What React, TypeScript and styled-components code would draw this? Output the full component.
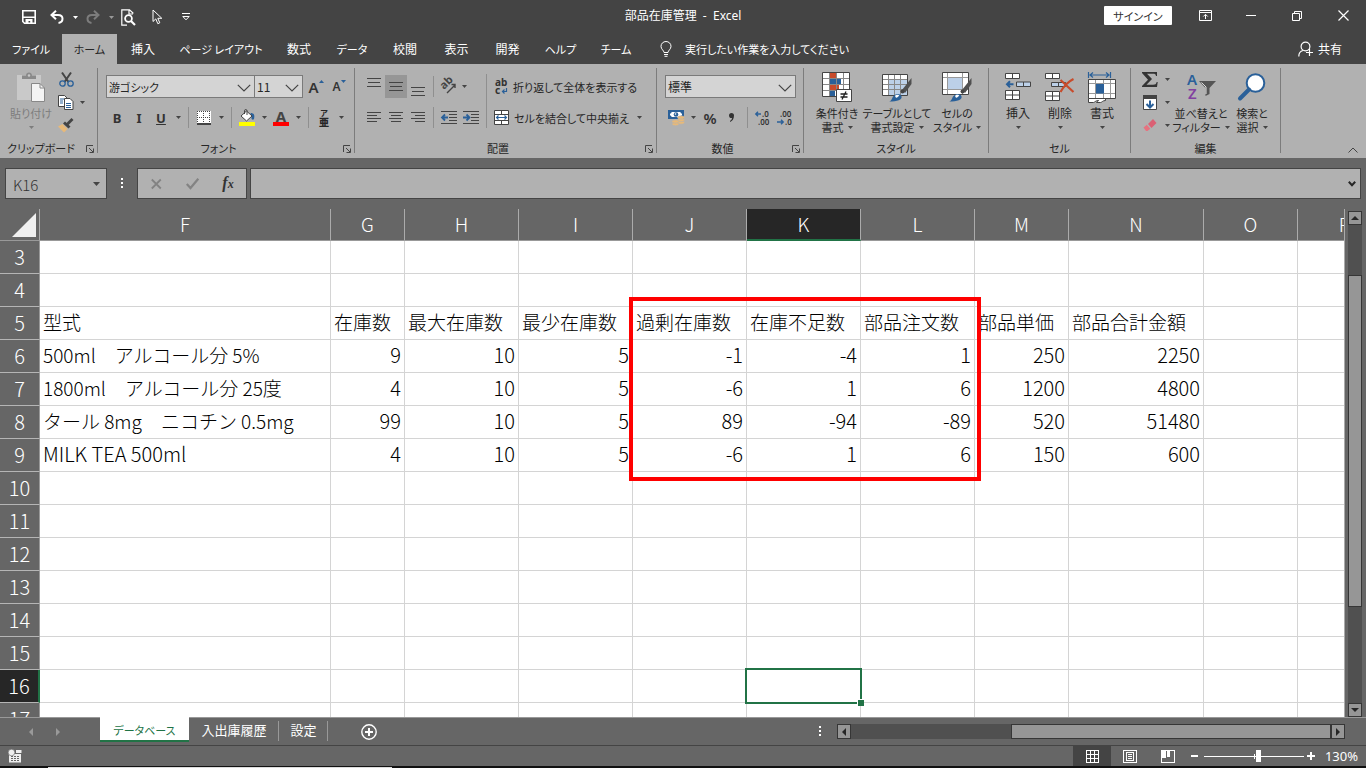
import React from 'react';
import styled, { createGlobalStyle } from 'styled-components';

const ui = '"Noto Sans CJK JP", "Noto Sans", sans-serif';

const GlobalStyle = createGlobalStyle`
  * { box-sizing: border-box; }
  body { margin: 0; background: #666; }
  button, select, input { font: inherit; color: inherit; padding: 0; margin: 0; border: 0; background: none; border-radius: 0; }
  svg { display: block; flex: none; overflow: visible; }
`;

const Window = styled.div`
  display: flex;
  flex-direction: column;
  height: 100vh;
  overflow: hidden;
  background: #666;
  color: #262626;
  font: 12px/14px ${ui};
  font-feature-settings: 'palt';
`;

/* ---------- title bar and tabs ---------- */
const TitleBar = styled.header`
  display: grid;
  grid-template-columns: 1fr auto 1fr;
  align-items: center;
  height: 34px;
  flex: none;
  background: #444;
  color: #fff;
`;
const QuickAccess = styled.div`
  display: flex;
  align-items: center;
  padding-left: 18px;
`;
const Title = styled.h1`
  margin: 0;
  font: 12px/14px "Noto Sans", "Noto Sans CJK JP", sans-serif;
  font-feature-settings: normal;
  white-space: pre;
  padding-bottom: 3px;
`;
const WindowButtons = styled.div`
  display: flex;
  align-items: center;
  justify-content: flex-end;
  padding-bottom: 3px;
`;
const SignIn = styled.button`
  width: 68px;
  height: 19px;
  margin-right: 10px;
  background: #fff;
  color: #333;
  font-size: 11px;
  border-radius: 1px;
`;
const IconButton = styled.button<{ $w?: number; $h?: number; $on?: boolean }>`
  display: flex;
  align-items: center;
  justify-content: center;
  flex: none;
  width: ${p => p.$w ?? 22}px;
  height: ${p => p.$h ?? 23}px;
  background: ${p => (p.$on ? '#969696' : 'transparent')};
`;
const TabRow = styled.nav`
  display: flex;
  flex: none;
  height: 30px;
  background: #444;
  color: #fff;
`;
const Tab = styled.button<{ $w: number; $kana?: boolean; $on?: boolean }>`
  width: ${p => p.$w}px;
  white-space: nowrap;
  font-size: ${p => (p.$kana ? 11 : 12)}px;
  background: ${p => (p.$on ? '#b1b1b1' : 'transparent')};
  color: ${p => (p.$on ? '#262626' : '#fff')};
`;
const TellMe = styled.label`
  display: flex;
  align-items: center;
  gap: 13px;
  flex: 1;
  padding-left: 16px;
  font-size: 11px;
  input { width: 200px; }
  input::placeholder { color: #fff; opacity: 1; }
`;
const Share = styled.button`
  display: flex;
  align-items: center;
  gap: 4px;
  padding-right: 24px;
`;

/* ---------- ribbon ---------- */
const Ribbon = styled.div`
  display: flex;
  flex: none;
  height: 94px;
  padding: 4px 0 5px;
  background: #b1b1b1;
`;
const Group = styled.section<{ $w: number }>`
  display: flex;
  flex-direction: column;
  flex: none;
  width: ${p => p.$w}px;
  border-right: 1px solid #7c7c7c;
`;
const GroupBody = styled.div<{ $pad?: number }>`
  display: flex;
  flex: 1;
  min-height: 0;
  padding-left: ${p => p.$pad ?? 8}px;
`;
const GroupFoot = styled.footer`
  display: flex;
  align-items: flex-end;
  height: 12px;
  font-size: 11px;
  text-align: center;
  white-space: nowrap;
  line-height: 10px;
  span { flex: 1; }
  button { display: flex; justify-content: flex-end; align-items: flex-end; width: 12px; height: 12px; margin-right: 3px; }
`;
const Stack = styled.div<{ $gap?: number; $top?: number }>`
  display: flex;
  flex-direction: column;
  gap: ${p => p.$gap ?? 8}px;
  padding-top: ${p => p.$top ?? 7}px;
`;
const Row = styled.div`
  display: flex;
  align-items: center;
  height: 23px;
`;
const Sep = styled.i<{ $h?: number }>`
  width: 1px;
  height: ${p => p.$h ?? 21}px;
  margin: 0 4px;
  background: #8f8f8f;
`;
const Combo = styled.div<{ $w: number }>`
  position: relative;
  width: ${p => p.$w}px;
  height: 23px;
  border: 1px solid #7a7a7a;
  background: #d4d4d4;
  & + & { border-left: 0; }
  select { appearance: none; width: 100%; height: 21px; padding-left: 2px; outline: 0; font-size: ${p => (p.$w > 140 ? 11 : 12)}px; }
  svg { position: absolute; right: 3px; top: 8px; pointer-events: none; }
`;
const Glyph = styled.span<{ $size?: number; $weight?: number }>`
  font: ${p => p.$weight ?? 700} ${p => p.$size ?? 13}px/16px "Noto Sans", "Open Sans", sans-serif;
  color: #333;
`;
const WideButton = styled.button`
  display: flex;
  align-items: center;
  gap: 5px;
  height: 23px;
  padding-left: 3px;
  font-size: 11px;
  white-space: nowrap;
`;
const BigButton = styled.button<{ $w: number; $dim?: boolean; $small?: boolean }>`
  display: flex;
  flex-direction: column;
  align-items: center;
  flex: none;
  width: ${p => p.$w}px;
  height: 70px;
  padding-top: 3px;
  white-space: nowrap;
  font-size: ${p => (p.$small ? 11 : 12)}px;
  color: ${p => (p.$dim ? '#7d7d7d' : '#262626')};
`;
const BigIcon = styled.span`
  display: flex;
  align-items: center;
  justify-content: center;
  height: 32px;
  margin-bottom: 3px;
`;
const Line = styled.span`
  display: flex;
  align-items: center;
  justify-content: center;
  gap: 4px;
  height: 14px;
`;
const RibbonEnd = styled.div`
  display: flex;
  flex: 1;
  align-items: flex-end;
  justify-content: flex-end;
  padding-right: 3px;
`;
const FontColor = styled.span`
  width: 16px;
  height: 17px;
  border-bottom: 4px solid #f00;
  font: bold 15px/14px "Noto Sans", sans-serif;
  color: #444;
`;
const Phonetic = styled.span`
  display: flex;
  flex-direction: column;
  font: bold 8px/8px ${ui};
  b { font-size: 10px; line-height: 10px; }
`;

/* ---------- formula bar ---------- */
const FormulaRow = styled.div`
  display: flex;
  align-items: center;
  flex: none;
  height: 51px;
  padding: 0 5px;
`;
const Field = styled.div<{ $w?: number; $gap?: number }>`
  display: flex;
  align-items: center;
  height: 31px;
  width: ${p => (p.$w ? p.$w + 'px' : 'auto')};
  flex: ${p => (p.$w ? 'none' : '1')};
  margin-right: ${p => p.$gap ?? 0}px;
  border: 1px solid #444;
  background: #b1b1b1;
  input { flex: 1; min-width: 0; height: 29px; padding: 1px 0 0 7px; font-size: 15px; font-weight: 300; color: #333; outline: 0; }
`;
const Grip = styled.span`
  margin-right: 14px;
`;
const Fx = styled.i`
  font: italic bold 16px/16px "Liberation Serif", serif;
  color: #333;
  small { font-size: 12px; }
`;

/* ---------- worksheet ---------- */
const Work = styled.main`
  display: flex;
  flex: 1;
  min-height: 0;
`;
const Canvas = styled.div`
  position: relative;
  flex: 1;
  min-width: 0;
  overflow: hidden;
  background: #fff;
  border-right: 1px solid #ababab;
`;
const Sheet = styled.table`
  width: 100%;
  min-width: 1392px;
  table-layout: fixed;
  border-collapse: separate;
  border-spacing: 0;
  font-size: 19px;
  font-weight: 300;
  line-height: 28px;
  font-feature-settings: normal;
  color: #000;
  tr { height: 33px; }
  thead tr { height: 32px; }
`;
const ColHead = styled.th<{ $on?: boolean }>`
  padding: ${p => (p.$on ? '0 0 1px' : '0 0 2px')};
  font-weight: 300;
  color: #fff;
  background: ${p => (p.$on ? '#262626' : '#666')};
  border-right: 1px solid #ababab;
  border-bottom: ${p => (p.$on ? '2px solid #217346' : '1px solid #999')};
`;
const Corner = styled.div`
  display: flex;
  justify-content: flex-end;
  padding: 3px 3px 0 0;
`;
const RowHead = styled.th<{ $on?: boolean }>`
  padding: 0;
  font-weight: 300;
  font-size: 20px;
  color: #fff;
  background: ${p => (p.$on ? '#262626' : '#666')};
  border-right: ${p => (p.$on ? '2px solid #217346' : '1px solid #999')};
  border-bottom: 1px solid #b5b5b5;
`;
const Cell = styled.td<{ $num?: boolean; $latin?: boolean }>`
  position: relative;
  padding: 0 3px 3px;
  white-space: pre;
  font-size: ${p => (p.$latin ? 20 : 19)}px;
  text-align: ${p => (p.$num ? 'right' : 'left')};
  border-right: 1px solid #d4d4d4;
  border-bottom: 1px solid #d4d4d4;
`;
const Selection = styled.div`
  position: absolute;
  inset: -2px;
  border: 2px solid #217346;
  z-index: 1;
  &::after {
    content: '';
    position: absolute;
    right: -4px;
    bottom: -4px;
    width: 6px;
    height: 6px;
    background: #217346;
    border: solid #fff;
    border-width: 1px 0 0 1px;
  }
`;
const Highlight = styled.div`
  position: absolute;
  left: 629px;
  top: 88px;
  width: 352px;
  height: 184px;
  border: 4px solid #f00;
`;
const VScroll = styled.div`
  display: flex;
  flex-direction: column;
  width: 21px;
  padding: 2px 4px 0 3px;
`;
const Track = styled.div<{ $v?: boolean }>`
  display: flex;
  flex-direction: ${p => (p.$v ? 'column' : 'row')};
  flex: 1;
  background: #505050;
`;
const Space = styled.div<{ $f: number }>`
  flex: ${p => p.$f} 1 0;
`;
const Thumb = styled.div<{ $f: number }>`
  flex: ${p => p.$f} 1 0;
  border: 1px solid #363636;
  background: #969696;
`;
const ScrollButton = styled.button`
  display: flex;
  align-items: center;
  justify-content: center;
  flex: none;
  width: 14px;
  height: 14px;
  border: 1px solid #363636;
  background: #969696;
`;

/* ---------- sheet tabs and status bar ---------- */
const SheetBar = styled.div`
  display: flex;
  flex: none;
  height: 28px;
  color: #fff;
`;
const SheetNav = styled.div`
  display: flex;
  align-items: center;
  width: 100px;
  padding-left: 17px;
  border-top: 1px solid #999;
`;
const SheetTab = styled.button<{ $w: number; $on?: boolean }>`
  width: ${p => p.$w}px;
  height: ${p => (p.$on ? 25 : 28)}px;
  white-space: nowrap;
  ${p => p.$on
    ? 'padding-top:2px;font-size:11px;background:#fff;color:#217346;border-bottom:2px solid #217346;'
    : 'padding-bottom:3px;font-size:13px;border-top:1px solid #999;background:linear-gradient(#999,#999) right 3px/1px 20px no-repeat;'}
`;
const SheetRest = styled.div`
  display: flex;
  flex: 1;
  align-items: center;
  padding: 0 21px 0 30px;
  border-top: 1px solid #999;
`;
const NewSheet = styled.div`
  flex: 461 1 0;
`;
const HScroll = styled.div`
  display: flex;
  align-items: center;
  gap: 16px;
  flex: 526 1 0;
`;
const HBar = styled.div`
  display: flex;
  flex: 1;
  height: 15px;
  ${ScrollButton} { height: 15px; }
`;
const Status = styled.footer`
  display: flex;
  align-items: center;
  flex: none;
  height: 21px;
  padding: 0 8px;
  border-top: 1px solid #444;
  color: #fff;
`;
const StatusRight = styled.div`
  display: flex;
  align-items: center;
  margin-left: auto;
`;
const ViewButton = styled(IconButton)`
  background: ${p => (p.$on ? '#444' : 'transparent')};
`;
const Zoom = styled.input`
  appearance: none;
  width: 100px;
  height: 14px;
  margin: 0 3px;
  background:
    linear-gradient(#fff, #fff) 0 7px / 100% 1px no-repeat,
    linear-gradient(#fff, #fff) 50px 5px / 1px 5px no-repeat;
  &::-webkit-slider-thumb { appearance: none; width: 5px; height: 12px; background: #fff; }
`;
const Percent = styled.output`
  width: 43px;
  text-align: right;
  font: 13px/14px "Noto Sans", sans-serif;
`;
const Desktop = styled.div`
  flex: none;
  height: 2px;
  padding: 1px 0 0 48px;
  background: #111;
  &::before { content: ''; display: block; width: 344px; height: 1px; background: #ddd; }
`;

/* ---------- icons ---------- */
const K = '#444', B = '#2a6099';
type SvgProps = { w: number; h: number; children: React.ReactNode; crisp?: boolean };
const Svg = ({ w, h, children, crisp }: SvgProps) => (
  <svg width={w} height={h} viewBox={`0 0 ${w} ${h}`} fill="none" shapeRendering={crisp ? 'crispEdges' : undefined} aria-hidden="true">{children}</svg>
);
const Caret = ({ c = K }: { c?: string }) => <Svg w={5} h={3}><path d="M0 0h5L2.500 3z" fill={c} /></Svg>;
const CaretButton = ({ w = 12, c, label }: { w?: number; c?: string; label: string }) => (
  <IconButton $w={w} aria-label={label}><Caret c={c} /></IconButton>
);
const Chevron = () => <Svg w={14} h={8}><path d="M.8.8 7 7 13.200.8" stroke={K} strokeWidth="1.200" /></Svg>;
const Launcher = () => <Svg w={8} h={8}><path d="M.5 7V.5H7M3 3l4 4M7.500 3.500v4h-4" stroke={K} /></Svg>;

const Lines = ({ rows }: { rows: [number, number, number][] }) => (
  <Svg w={14} h={20} crisp>{rows.map(([x, y, w], i) => <rect key={i} x={x} y={y} width={w} height={1} fill={K} />)}</Svg>
);
const SaveIcon = () => <Svg w={14} h={14}><path d="M.8.8h12.400v12.400H2.500L.8 11.500z" stroke="#fff" strokeWidth="1.600" /><path d="M1 6.500h12V8H1zM3.500 9h7v4.500H8.200V11H6.500v2.500h-3z" fill="#fff" /></Svg>;
const UndoIcon = ({ flip }: { flip?: boolean }) => (
  <Svg w={16} h={14}><g transform={flip ? 'translate(16 0) scale(-1 1)' : undefined} stroke={flip ? '#7d7d7d' : '#fff'} strokeWidth="2"><path d="M7 .8 2.500 5 7 9.200" /><path d="M2.500 5H9c3.200 0 4.500 1.800 4.500 3.800 0 2.400-1.800 3.900-4 4.200" /></g></Svg>
);
const PreviewIcon = () => <Svg w={16} h={17}><path d="M13 4.500V4L9.500.8H1.800v15.400H7M9 1v4h4" stroke="#fff" strokeWidth="1.200" /><circle cx="8.500" cy="9.500" r="3.400" stroke="#fff" strokeWidth="1.800" /><path d="m11 12 4 4" stroke="#fff" strokeWidth="2.200" /></Svg>;
const PointerIcon = () => <Svg w={11} h={16}><path d="M1 1v11.500l2.800-2.600 2 4.800 2-.9-2-4.500h4z" stroke="#fff" /></Svg>;
const CustomizeIcon = () => <Svg w={8} h={8}><path d="M0 .5h8" stroke="#fff" /><path d="M.8 3.500h6.400L4 6.800z" stroke="#fff" /></Svg>;
const RibbonIcon = () => <Svg w={13} h={11}><path d="M.5.5h12v10H.5zM.5 2.500h12M6.500 9V4.500M4.300 6.500l2.200-2.200 2.200 2.200" stroke="#fff" /></Svg>;
const MinIcon = () => <Svg w={10} h={1}><path d="M0 .5h10" stroke="#fff" /></Svg>;
const RestoreIcon = () => <Svg w={10} h={10}><path d="M.5 2.500h7v7h-7zM2.500 2.500v-2h7v7h-2" stroke="#fff" /></Svg>;
const CloseIcon = () => <Svg w={11} h={11}><path d="m.5.5 10 10m0-10-10 10" stroke="#fff" strokeWidth="1.200" /></Svg>;
const BulbIcon = () => <Svg w={12} h={16}><path d="M4 11.500C4 9.500 1 8.300 1 5.300a5 4.800 0 0 1 10 0c0 3-3 4.200-3 6.200zM4 13.500h4M4.500 15.300h3" stroke="#fff" /></Svg>;
const ShareIcon = () => <Svg w={16} h={16}><circle cx="7.500" cy="5.500" r="4.400" stroke="#fff" strokeWidth="1.200" /><path d="M.8 15.500c0-3.500 2-5.500 4.200-6M11.500 8v7M8 11.500h7" stroke="#fff" strokeWidth="1.200" /></Svg>;

const PasteIcon = () => <Svg w={28} h={30}><path d="M0 3h24v25H0z" fill="#c9c9c9" /><path d="M5 7V3.500h4C9 1.500 10.300.5 12 .5s3 1 3 3h4V7z" fill="#8a8a8a" /><circle cx="12" cy="3.500" r="1.200" fill="#c9c9c9" /><path d="M14.500 11.500H23l4.500 4.500v13.500h-13z" fill="#f4f4f4" stroke="#888" /><path d="M23 11.500V16h4.500" stroke="#888" /></Svg>;
const CutIcon = () => <Svg w={15} h={15}><path d="M3 .5 9.500 10M12 .5 5.500 10" stroke={K} strokeWidth="2" /><circle cx="3.500" cy="11.500" r="2.700" stroke={B} strokeWidth="1.300" /><circle cx="11.500" cy="11.500" r="2.700" stroke={B} strokeWidth="1.300" /></Svg>;
const CopyIcon = () => <Svg w={16} h={15}><path d="M.5.500h6l3 3v8h-9z" fill="#fff" stroke={K} /><path d="M2 4h4M2 6h3M2 8h3" stroke={B} /><path d="M6.500 3.500H12l3 3v8H6.500z" fill="#fff" stroke={K} /><path d="M8 8.500h5M8 10.500h5M8 12.500h5" stroke={B} /></Svg>;
const BrushIcon = () => <Svg w={16} h={15}><path d="M0 8.500 4.500 6l5 5L6 14.500z" fill="#e8b978" /><path d="m5 5.500 2-2 5.500 5-2 2z" fill={K} /><path d="m9 6.500 5.500-5.500" stroke={K} strokeWidth="2.800" /></Svg>;
const BorderIcon = () => <Svg w={14} h={14} crisp><path d="M0 0h14v14H0z" fill="#fff" /><path d="M0 .5h14M0 6.500h14M.5 0v14M6.500 0v14M12.500 0v14" stroke={K} strokeDasharray="1 1" /><path d="M0 13h14" stroke={K} strokeWidth="2" /></Svg>;
const FillIcon = () => <Svg w={16} h={17}><path d="M11.500 4c3.500 0 4.500 2 3.500 6-.8 1.200-2.800.8-2.500-1.500z" fill={B} /><path d="m2 7 5.500-5L13 7l-5.500 5z" fill="#fff" stroke={K} /><path d="M5.500 5V1.500C5.500.3 8 .3 8 1.500V6" stroke={K} /><path d="M0 13h16v4H0z" fill="#ff0" /></Svg>;
const OrientIcon = () => <Svg w={18} h={17}><text x="0" y="0" transform="translate(5 12) rotate(-45)" fontFamily="Noto Sans" fontSize="11" fontWeight="bold" fill={K}>ab</text><path d="m8 15 8-8M12.500 6.500h3.500v3.500" stroke={K} strokeWidth="1.400" /></Svg>;
const IndentIcon = ({ right }: { right?: boolean }) => (
  <Svg w={16} h={14}><path d="M0 .5h16M8 3.500h8M8 6.500h8M8 9.500h8M0 12.500h16" stroke={K} />{right
    ? <path d="M0 6.500h6M3.500 3.500l3 3-3 3" stroke={B} strokeWidth="1.800" />
    : <path d="M1 6.500h6M4 3.500l-3 3 3 3" stroke={B} strokeWidth="1.800" />}</Svg>
);
const WrapIcon = () => <Svg w={14} h={16}><g fontFamily="Noto Sans" fontSize="10" fontWeight="bold" fill="#333"><text x="1" y="7">ab</text><text x="1" y="15">c</text></g><path d="M12.500 9v3.500H8.500M10.500 10.500l-2 2 2 2" stroke={B} strokeWidth="1.200" /></Svg>;
const MergeIcon = () => <Svg w={15} h={15}><path d="M.5.500h14v14H.5z" fill="#fff" /><path d="M.5.500h14v14H.5zM.5 4.500h14M.5 10.500h14M7.500.5v4M7.500 10.500v4" stroke={K} /><path d="M2.500 7.500h10M4.500 5.500l-2 2 2 2M10.500 5.500l2 2-2 2" stroke={B} strokeWidth="1.100" /></Svg>;
const MoneyIcon = () => <Svg w={17} h={17}><path d="M0 1h16v9H0z" fill={B} /><path d="M3.500 3h9c0 1 .5 1.500 1.500 1.500v2c-1 0-1.500.5-1.500 1.500h-9C3.500 7 3 6.500 2 6.500v-2c1 0 1.500-.5 1.500-1.500z" fill="#fff" /><circle cx="8" cy="5.500" r="2.300" fill={B} /><circle cx="7.500" cy="5" r=".8" fill="#fff" /><g fill="#e8b978" stroke="#b1b1b1" strokeWidth=".6"><ellipse cx="13" cy="13.500" rx="3.500" ry="1.700" /><ellipse cx="13" cy="11" rx="3.500" ry="1.700" /><ellipse cx="13" cy="8.500" rx="3.500" ry="1.700" /><ellipse cx="7.500" cy="15" rx="3.500" ry="1.700" /><ellipse cx="7.500" cy="12.500" rx="3.500" ry="1.700" /></g></Svg>;
const DecimalIcon = ({ less }: { less?: boolean }) => (
  <Svg w={16} h={16}><g fontFamily="Noto Sans" fontSize="8" fontWeight="600" fill="#333">{less
    ? <><text x="3" y="7">.00</text><text x="8" y="15">.0</text></>
    : <><text x="7" y="7">.0</text><text x="3" y="15">.00</text></>}</g>
    {less ? <path d="M0 12h6M4 9.800 6.200 12 4 14.200" stroke={B} strokeWidth="1.400" /> : <path d="M6 4H.8M3 1.800.8 4 3 6.200" stroke={B} strokeWidth="1.400" />}</Svg>
);
const CondIcon = () => (
  <Svg w={30} h={30}><path d="M.5.500h27v24H.5z" fill="#fff" /><path d="M8 .5h6V6H8zM8 13h9v5H8z" fill="#c84b2b" /><path d="M8 7h11v5H8zM8 19h5v5.500H8z" fill={B} /><path d="M.5 6.500h27M.5 12.500h27M.5 18.500h27M7.500.5v24M14.500.5v24M21.500.5v24" stroke="#888" /><path d="M.5.500h27v24H.5z" stroke={K} /><path d="M14.500 17.500h15v12h-15z" fill="#fff" stroke={K} /><path d="M18.500 22h7M18.500 25h7M24 19.500l-4 8" stroke="#222" strokeWidth="1.300" /></Svg>
);
const BigBrush = () => <><path d="m20 18 9.500-12v6L23 21z" fill="#505050" /><circle cx="20.500" cy="19.500" r="2" fill={K} /><path d="M7 29.500c3-.8 2.500-3 4.500-5.500 2.500-3 7-2.500 8 .2 1 3.600-4 5.300-12.500 5.300z" fill={B} /><path d="M13 24c1-2 4-1.600 4.300 0-1.300 0-1.800 2-3.300 1.800z" fill="#fff" /></>;
const TableIcon = () => <Svg w={30} h={30}><path d="M.5 2.500h25v21H.5z" fill="#fff" /><path d="M7 8h18.500v15.500H7z" fill="#bcd0e8" /><path d="M.5 7.500h25M.5 12.500h25M.5 17.500h25M6.500 2.500v21M12.500 2.500v21M18.500 2.500v21" stroke="#888" /><path d="M.5 2.500h25v21H.5z" stroke={K} /><BigBrush /></Svg>;
const StyleIcon = () => <Svg w={30} h={30}><path d="M.5.500h26v22H.5z" fill="#fff" /><path d="M.5 5.500h26M.5 17.500h26M5.500.5v22M20.500.5v22" stroke="#999" /><path d="M6 6h14v11H6z" fill="#bcd0e8" /><path d="M.5.500h26v22H.5z" stroke={K} /><BigBrush /></Svg>;
const InsertIcon = () => <Svg w={26} h={28}><path d="M.5.500h14v5H.5zM7.500.5v5M.5 17.500h14v9H.5zM.5 22h14M7.500 17.500v9" fill="#fff" stroke={K} /><path d="M11.500 9h14v4.500h-14zM18.500 9v4.500" fill="#bcd0e8" stroke={K} /><path d="M2 11.300h6.500M5 8.300l-3 3 3 3" stroke={B} strokeWidth="2" /></Svg>;
const DeleteIcon = () => <Svg w={30} h={29}><path d="M.5.500h14v5H.5zM7.500.5v5M.5 18.500h14v9H.5zM.5 23h14M7.500 18.500v9" fill="#fff" stroke={K} /><path d="M6.500 9.500h14v4h-14zM13.500 9.500v4" fill="#bcd0e8" stroke={K} /><path d="m15.500 7 13 12M28.500 6c-5 2.500-10 7.500-13 13" stroke="#c84b2b" strokeWidth="2.200" /></Svg>;
const FormatIcon = () => <Svg w={28} h={31}><path d="M.5 0v6M22.500 0v6M2 3h19M5 .5 2 3l3 2.500M18 .5 21 3l-3 2.500" stroke={B} strokeWidth="1.200" /><path d="M.5 7.500h27v19H.5z" fill="#fff" /><path d="M.5 11.500h27M.5 21.500h27M7.500 7.500v19M15.500 7.500v19M22.500 7.500v19" stroke="#999" /><path d="M8 12h8v9.500H8z" fill={B} /><path d="M.5 7.500h27v19H.5z" stroke={K} /><path d="M.5 26.500h17v2c-3 0-3.500 2-5 2h-4c1-1 2-1.500 2-2-3 0-4 2-5 2h-5z" fill="#fff" stroke={K} /></Svg>;
const SigmaIcon = () => <Svg w={16} h={15}><path d="M0 0h15v4h-1c-.3-1.800-1-2.200-3-2.200H5L10 7l-5.500 5.700H11c2.300 0 3.200-.5 3.700-2.700h1l-.7 5H0v-1l6-6.300L0 1z" fill="#333" /></Svg>;
const FillDownIcon = () => <Svg w={14} h={15}><path d="M.5.500h13v14H.5z" fill="#fff" stroke={K} /><path d="M0 0h14v4H0z" fill={K} /><path d="M7 5.500v7M3.500 9 7 12.500 10.500 9" stroke={B} strokeWidth="2" /></Svg>;
const EraserIcon = () => <Svg w={14} h={13}><path d="m5 5 5-5 3.500 4-5 5z" fill="#db6074" /><path d="m.5 8.500 3.300-2.800 3.500 4L4.500 12H3z" fill="#e7727f" /></Svg>;
const SortIcon = () => <Svg w={29} h={28}><g fontFamily="Noto Sans" fontSize="15" fontWeight="600"><text x="0" y="12" fill={B}>A</text><text x="1" y="26" fill="#8140a0">Z</text></g><path d="M12 8h17l-6.500 7v6l-4 2v-8z" fill="#555" /><path d="M14.500 9.500 19 14v7" stroke="#ddd" /></Svg>;
const FindIcon = () => <Svg w={28} h={28}><circle cx="17.500" cy="10" r="8.800" fill="#fff" stroke={B} strokeWidth="2" /><path d="m11 16.500-9 9" stroke={B} strokeWidth="4" strokeLinecap="round" /></Svg>;
const Tri = ({ d, c = '#262626' }: { d: 'u' | 'd' | 'l' | 'r'; c?: string }) => {
  const p = { u: 'M0 6h8L4 2z', d: 'M0 2h8L4 6z', l: 'M6 0v8L2 4z', r: 'M2 0v8l4-4z' }[d];
  return <Svg w={8} h={8}><path d={p} fill={c} /></Svg>;
};
const Dots = () => <Svg w={2} h={11} crisp><path d="M0 0h2v2H0zM0 4h2v2H0zM0 8h2v2H0z" fill="#fff" /></Svg>;

/* ---------- data ---------- */
const tabs: [string, number][] = [['ファイル', 62], ['ホーム', 55], ['挿入', 52], ['ページ レイアウト', 104], ['数式', 52], ['データ', 54], ['校閲', 52], ['表示', 51], ['開発', 51], ['ヘルプ', 55], ['チーム', 56]];
const cols: [string, number?][] = [['F', 291], ['G', 74], ['H', 114], ['I', 114], ['J', 114], ['K', 114], ['L', 114], ['M', 94], ['N', 135], ['O', 94], ['P']];
const data: Record<number, (string | number)[]> = {
  5: ['型式', '在庫数', '最大在庫数', '最少在庫数', '過剰在庫数', '在庫不足数', '部品注文数', '部品単価', '部品合計金額'],
  6: ['500ml　アルコール分 5%', 9, 10, 5, -1, -4, 1, 250, 2250],
  7: ['1800ml　アルコール分 25度', 4, 10, 5, -6, 1, 6, 1200, 4800],
  8: ['タール 8mg　ニコチン 0.5mg', 99, 10, 5, 89, -94, -89, 520, 51480],
  9: ['MILK TEA 500ml', 4, 10, 5, -6, 1, 6, 150, 600],
};
const rows = Array.from({ length: 15 }, (_, i) => i + 3);

const Foot = ({ label, more }: { label: string; more?: boolean }) => (
  <GroupFoot><span>{label}</span>{more && <button aria-label={`${label}の設定`}><Launcher /></button>}</GroupFoot>
);
const Big = ({ w, icon, a, b, small }: { w: number; icon: React.ReactNode; a: string; b?: string; small?: boolean }) => (
  <BigButton $w={w} $small={small}><BigIcon>{icon}</BigIcon><Line>{a}</Line><Line>{b}<Caret /></Line></BigButton>
);

export default function App() {
  return (
    <Window lang="ja">
      <GlobalStyle />
      <TitleBar>
        <QuickAccess>
          <IconButton aria-label="上書き保存"><SaveIcon /></IconButton>
          <IconButton $w={34} aria-label="元に戻す"><UndoIcon /></IconButton>
          <CaretButton w={2} c="#fff" label="元に戻す一覧" />
          <IconButton $w={34} aria-label="やり直し"><UndoIcon flip /></IconButton>
          <CaretButton w={2} c="#999" label="やり直し一覧" />
          <IconButton $w={32} aria-label="印刷プレビュー"><PreviewIcon /></IconButton>
          <IconButton $w={26} aria-label="選択"><PointerIcon /></IconButton>
          <IconButton $w={32} aria-label="カスタマイズ"><CustomizeIcon /></IconButton>
        </QuickAccess>
        <Title>部品在庫管理  -  Excel</Title>
        <WindowButtons>
          <SignIn>サインイン</SignIn>
          <IconButton $w={46} aria-label="リボンの表示"><RibbonIcon /></IconButton>
          <IconButton $w={46} aria-label="最小化"><MinIcon /></IconButton>
          <IconButton $w={46} aria-label="元のサイズ"><RestoreIcon /></IconButton>
          <IconButton $w={46} aria-label="閉じる"><CloseIcon /></IconButton>
        </WindowButtons>
      </TitleBar>
      <TabRow>
        {tabs.map(([t, w]) => <Tab key={t} $w={w} $kana={/[ァ-ン]/.test(t)} $on={t === 'ホーム'}>{t}</Tab>)}
        <TellMe><BulbIcon /><input aria-label="操作アシスト" placeholder="実行したい作業を入力してください" /></TellMe>
        <Share><ShareIcon />共有</Share>
      </TabRow>

      <Ribbon>
        <Group $w={98}>
          <GroupBody>
            <BigButton $w={46} $dim $small><BigIcon><PasteIcon /></BigIcon><Line>貼り付け</Line><Line><Caret c="#7d7d7d" /></Line></BigButton>
            <Stack $gap={0} $top={0}>
              <Row><IconButton $w={24} aria-label="切り取り"><CutIcon /></IconButton></Row>
              <Row><IconButton $w={24} aria-label="コピー"><CopyIcon /></IconButton><CaretButton w={8} label="コピー一覧" /></Row>
              <Row><IconButton $w={24} aria-label="書式のコピー"><BrushIcon /></IconButton></Row>
            </Stack>
          </GroupBody>
          <Foot label="クリップボード" more />
        </Group>

        <Group $w={257}>
          <GroupBody>
            <Stack>
              <Row>
                <Combo $w={149}><select aria-label="フォント名"><option>游ゴシック</option></select><Chevron /></Combo>
                <Combo $w={48}><select aria-label="フォント サイズ"><option>11</option></select><Chevron /></Combo>
                <IconButton $w={26} aria-label="フォント サイズの拡大"><Glyph $size={15} $weight={600}>A</Glyph><Svg w={5} h={14}><path d="M0 3h5L2.500 0z" fill={B} /></Svg></IconButton>
                <IconButton $w={20} aria-label="フォント サイズの縮小"><Glyph $size={12} $weight={600}>A</Glyph><Svg w={5} h={14}><path d="M0 0h5L2.500 3z" fill={B} /></Svg></IconButton>
              </Row>
              <Row>
                <IconButton aria-label="太字"><Glyph>B</Glyph></IconButton>
                <IconButton aria-label="斜体"><Glyph as="i">I</Glyph></IconButton>
                <IconButton aria-label="下線"><Glyph as="u">U</Glyph></IconButton>
                <CaretButton label="下線の種類" /><Sep />
                <IconButton aria-label="罫線"><BorderIcon /></IconButton><CaretButton label="罫線の種類" /><Sep />
                <IconButton aria-label="塗りつぶし"><FillIcon /></IconButton><CaretButton label="塗りつぶしの色" />
                <IconButton aria-label="文字色"><FontColor>A</FontColor></IconButton><CaretButton label="フォントの色" /><Sep />
                <IconButton aria-label="ふりがな"><Phonetic>ア<b>亜</b></Phonetic></IconButton><CaretButton label="ふりがなの設定" />
              </Row>
            </Stack>
          </GroupBody>
          <Foot label="フォント" more />
        </Group>

        <Group $w={302}>
          <GroupBody>
            <Stack>
              <Row>
                <IconButton aria-label="上揃え"><Lines rows={[[0, 1, 14], [1, 5, 12], [0, 9, 14]]} /></IconButton>
                <IconButton $on aria-label="上下中央揃え"><Lines rows={[[0, 5, 14], [1, 9, 12], [0, 13, 14]]} /></IconButton>
                <IconButton aria-label="下揃え"><Lines rows={[[0, 10, 14], [1, 14, 12], [0, 18, 14]]} /></IconButton>
                <Sep />
                <IconButton $w={20} aria-label="方向"><OrientIcon /></IconButton><CaretButton label="方向の種類" />
              </Row>
              <Row>
                <IconButton aria-label="左揃え"><Lines rows={[[0, 4, 14], [0, 7, 10], [0, 10, 14], [0, 13, 10]]} /></IconButton>
                <IconButton aria-label="中央揃え"><Lines rows={[[0, 4, 14], [2, 7, 10], [0, 10, 14], [2, 13, 10]]} /></IconButton>
                <IconButton aria-label="右揃え"><Lines rows={[[0, 4, 14], [4, 7, 10], [0, 10, 14], [4, 13, 10]]} /></IconButton>
                <Sep />
                <IconButton aria-label="インデントを減らす"><IndentIcon /></IconButton>
                <IconButton aria-label="インデントを増やす"><IndentIcon right /></IconButton>
              </Row>
            </Stack>
            <Stack $top={6}><Sep $h={54} /></Stack>
            <Stack>
              <Row><WideButton><WrapIcon />折り返して全体を表示する</WideButton></Row>
              <Row><WideButton><MergeIcon />セルを結合して中央揃え</WideButton><CaretButton w={22} label="結合の種類" /></Row>
            </Stack>
          </GroupBody>
          <Foot label="配置" more />
        </Group>

        <Group $w={147}>
          <GroupBody>
            <Stack>
              <Row><Combo $w={131}><select aria-label="数値の書式"><option>標準</option></select><Chevron /></Combo></Row>
              <Row>
                <IconButton aria-label="通貨表示形式"><MoneyIcon /></IconButton><CaretButton label="通貨の種類" />
                <IconButton aria-label="パーセント"><Glyph $size={15} $weight={600}>%</Glyph></IconButton>
                <IconButton aria-label="桁区切り"><Svg w={6} h={10}><path d="M0 2.500a2.500 2.500 0 0 1 5 0C5 6 3.500 8 1 9V8c1.200-.8 2-1.800 2-3C1.500 5.500 0 4.300 0 2.500z" fill="#333" /></Svg></IconButton>
                <Sep />
                <IconButton aria-label="小数点以下を増やす"><DecimalIcon /></IconButton>
                <IconButton aria-label="小数点以下を減らす"><DecimalIcon less /></IconButton>
              </Row>
            </Stack>
          </GroupBody>
          <Foot label="数値" more />
        </Group>

        <Group $w={185}>
          <GroupBody $pad={4}>
            <Big w={58} icon={<CondIcon />} a="条件付き" b="書式" small />
            <Big w={62} icon={<TableIcon />} a="テーブルとして" b="書式設定" small />
            <Big w={58} icon={<StyleIcon />} a="セルの" b="スタイル" small />
          </GroupBody>
          <Foot label="スタイル" />
        </Group>

        <Group $w={142}>
          <GroupBody>
            <Big w={42} icon={<InsertIcon />} a="挿入" />
            <Big w={42} icon={<DeleteIcon />} a="削除" />
            <Big w={42} icon={<FormatIcon />} a="書式" />
          </GroupBody>
          <Foot label="セル" />
        </Group>

        <Group $w={150}>
          <GroupBody>
            <Stack $gap={0} $top={0}>
              <Row><IconButton aria-label="合計"><SigmaIcon /></IconButton><CaretButton label="合計の種類" /></Row>
              <Row><IconButton aria-label="フィル"><FillDownIcon /></IconButton><CaretButton label="フィルの種類" /></Row>
              <Row><IconButton aria-label="クリア"><EraserIcon /></IconButton><CaretButton label="クリアの種類" /></Row>
            </Stack>
            <Big w={56} icon={<SortIcon />} a="並べ替えと" b="フィルター" small />
            <Big w={46} icon={<FindIcon />} a="検索と" b="選択" small />
          </GroupBody>
          <Foot label="編集" />
        </Group>
        <RibbonEnd><IconButton $w={20} $h={6} aria-label="リボンを折りたたむ"><Svg w={10} h={6}><path d="m.5 5.500 4.500-4.500 4.500 4.500" stroke={K} /></Svg></IconButton></RibbonEnd>
      </Ribbon>

      <FormulaRow>
        <Field $w={102} $gap={14}>
          <input aria-label="名前ボックス" defaultValue="K16" />
          <IconButton $w={19} aria-label="名前一覧"><Svg w={7} h={4}><path d="M0 0h7L3.500 4z" fill={K} /></Svg></IconButton>
        </Field>
        <Grip><Dots /></Grip>
        <Field $w={110} $gap={3}>
          <IconButton $w={36} aria-label="キャンセル"><Svg w={11} h={10}><path d="m.8.500 9 9m0-9-9 9" stroke="#838383" strokeWidth="1.800" /></Svg></IconButton>
          <IconButton $w={36} aria-label="入力"><Svg w={13} h={11}><path d="m.8 6 3.700 4L12.300.8" stroke="#838383" strokeWidth="2.200" /></Svg></IconButton>
          <IconButton $w={36} aria-label="関数の挿入"><Fx>f<small>x</small></Fx></IconButton>
        </Field>
        <Field>
          <input aria-label="数式バー" />
          <IconButton $w={17} aria-label="数式バーの展開"><Svg w={8} h={6}><path d="m.8.800 3.200 3.400L7.200.8" stroke="#262626" strokeWidth="2" /></Svg></IconButton>
        </Field>
      </FormulaRow>

      <Work>
        <Canvas>
          <Sheet>
            <colgroup>
              <col style={{ width: 40 }} />
              {cols.map(([c, w]) => <col key={c} style={{ width: w }} />)}
            </colgroup>
            <thead>
              <tr>
                <ColHead aria-label="すべて選択"><Corner><Svg w={24} h={24}><path d="M24 0v24H0z" fill="#f0f0f0" /></Svg></Corner></ColHead>
                {cols.map(([c]) => <ColHead key={c} $on={c === 'K'}>{c}</ColHead>)}
              </tr>
            </thead>
            <tbody>
              {rows.map(r => (
                <tr key={r}>
                  <RowHead scope="row" $on={r === 16}>{r}</RowHead>
                  {cols.map(([c], i) => {
                    const v = data[r]?.[i];
                    return (
                      <Cell key={c} $num={typeof v === 'number'} $latin={/^[ -~]+$/.test(String(v))}>
                        {v}{r === 16 && c === 'K' && <Selection />}
                      </Cell>
                    );
                  })}
                </tr>
              ))}
            </tbody>
          </Sheet>
          <Highlight />
        </Canvas>
        <VScroll>
          <ScrollButton aria-label="上へ"><Tri d="u" /></ScrollButton>
          <Track $v><Space $f={50} /><Thumb $f={332} /><Space $f={97} /></Track>
          <ScrollButton aria-label="下へ"><Tri d="d" /></ScrollButton>
        </VScroll>
      </Work>

      <SheetBar>
        <SheetNav>
          <IconButton $w={27} aria-label="前のシート"><Tri d="l" c="#999" /></IconButton>
          <IconButton $w={27} aria-label="次のシート"><Tri d="r" c="#999" /></IconButton>
        </SheetNav>
        <SheetTab $w={89} $on>データベース</SheetTab>
        <SheetTab $w={90}>入出庫履歴</SheetTab>
        <SheetTab $w={49}>設定</SheetTab>
        <SheetRest>
          <NewSheet>
            <IconButton aria-label="新しいシート"><Svg w={16} h={16}><circle cx="8" cy="8" r="7.200" stroke="#fff" strokeWidth="1.400" /><path d="M8 4v8M4 8h8" stroke="#fff" strokeWidth="2" /></Svg></IconButton>
          </NewSheet>
          <HScroll>
            <Dots />
            <HBar>
              <ScrollButton aria-label="左へ"><Tri d="l" /></ScrollButton>
              <Track><Space $f={161} /><Thumb $f={319} /></Track>
              <ScrollButton aria-label="右へ"><Tri d="r" /></ScrollButton>
            </HBar>
          </HScroll>
        </SheetRest>
      </SheetBar>
      <Status>
        <Svg w={14} h={14}><path d="M1 5h12v8.500H1z" fill="#eee" /><path d="M3 7.500h9M3 9.500h9M3 11.500h9" stroke="#666" strokeDasharray="2 1" /><path d="M8 1h5.500v3H8z" fill="#eee" /><circle cx="3.500" cy="3.500" r="3.300" fill="#eee" stroke="#666" strokeWidth=".6" /></Svg>
        <StatusRight>
          <ViewButton $w={38} $h={20} $on aria-label="標準"><Svg w={13} h={13} crisp><path d="M.5.500h12v12H.5zM.5 4.500h12M.5 8.500h12M4.500.5v12M8.500.5v12" stroke="#fff" /></Svg></ViewButton>
          <ViewButton $w={38} $h={20} aria-label="ページ レイアウト"><Svg w={14} h={13} crisp><path d="M.5.500h13v12H.5zM3.500 2.500h7v8h-7zM5 4.500h4M5 6.500h4M5 8.500h4" stroke="#fff" /></Svg></ViewButton>
          <ViewButton $w={38} $h={20} aria-label="改ページ プレビュー"><Svg w={14} h={13} crisp><path d="M.5.500h13v12H.5z" stroke="#fff" /><path d="M1 1h4v7H1zM6 1h3v6H6z" fill="#fff" /></Svg></ViewButton>
          <IconButton $w={14} $h={20} aria-label="縮小"><Svg w={7} h={2}><path d="M0 0h7v2H0z" fill="#fff" /></Svg></IconButton>
          <Zoom type="range" aria-label="ズーム" min={0} max={100} defaultValue={55} />
          <IconButton $w={8} $h={20} aria-label="拡大"><Svg w={8} h={8}><path d="M3 0h2v3h3v2H5v3H3V5H0V3h3z" fill="#fff" /></Svg></IconButton>
          <Percent>130%</Percent>
        </StatusRight>
      </Status>
      <Desktop />
    </Window>
  );
}
